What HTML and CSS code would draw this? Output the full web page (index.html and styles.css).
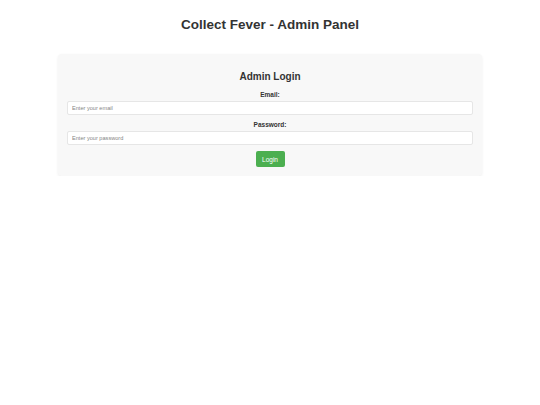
FILE: index.html
```html
<!DOCTYPE html>
<html lang="en">
<head>
  <meta charset="UTF-8" />
  <meta name="viewport" content="width=device-width, initial-scale=1.0"/>
  <title>Collect Fever - Admin Panel</title>
  <link rel="stylesheet" href="styles.css">
</head>
<body>

  <h1>Collect Fever - Admin Panel</h1>

  <div class="login-card">
    <h2>Admin Login</h2>
    <form class="login-form" onsubmit="return false;">
      <label for="email">Email:</label>
      <input type="email" id="email" placeholder="Enter your email">

      <label for="password">Password:</label>
      <input type="password" id="password" placeholder="Enter your password">

      <button type="submit">Login</button>
    </form>
  </div>

</body>
</html>
```

FILE: styles.css
```css
body {
  margin: 0;
  background: #fff;
  font-family: "Liberation Sans", Arial, sans-serif;
  color: #333;
  text-align: center;
}

h1 {
  margin: 0;
  padding: 17px 0 0;
  font-size: 13.5px;
  line-height: 16px;
  color: #333;
}

.login-card {
  width: 424px;
  box-sizing: border-box;
  margin: 21px auto 0;
  padding: 17px 9px 9px;
  background: #f8f8f8;
  border-radius: 4px;
  box-shadow: 0 1px 3px rgba(0, 0, 0, 0.07);
}

.login-card h2 {
  margin: 0 0 7.5px;
  font-size: 10px;
  line-height: 12px;
}

.login-form {
  display: flex;
  flex-direction: column;
  align-items: center;
}

.login-form label {
  font-size: 6.5px;
  line-height: 8px;
  font-weight: bold;
  margin-bottom: 2.5px;
  color: #333;
}

.login-form input {
  width: 100%;
  box-sizing: border-box;
  height: 13.5px;
  padding: 0 4px;
  margin-bottom: 6px;
  border: 1px solid #e6e6e6;
  border-radius: 2px;
  background: #fff;
  font-family: inherit;
  font-size: 5.6px;
  outline: none;
}

.login-form input::placeholder {
  color: #858585;
}

.login-form button {
  margin-top: 0.5px;
  width: 29px;
  height: 16px;
  padding: 0;
  border: none;
  border-radius: 2px;
  background: #4caf50;
  color: #fff;
  font-family: inherit;
  font-size: 6.5px;
  cursor: pointer;
}
```
